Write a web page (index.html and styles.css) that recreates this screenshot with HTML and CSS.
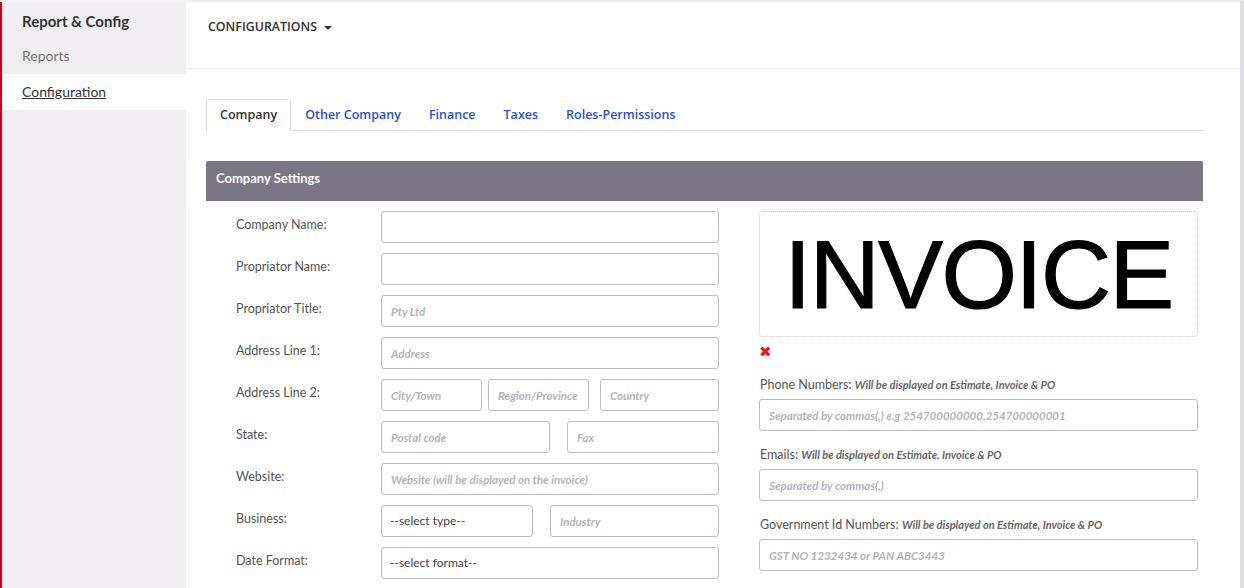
FILE: index.html
```html
<!DOCTYPE html>
<html>
<head>
<meta charset="utf-8">
<link rel="stylesheet" href="styles.css">
</head>
<body>
<div class="page">
  <aside class="sidebar">
    <div class="side-title">Report &amp; Config</div>
    <a class="side-link">Reports</a>
    <a class="side-link active">Configuration</a>
  </aside>
  <main class="main">
    <header class="topbar">
      <span class="topbar-title">CONFIGURATIONS</span>
      <span class="caret"></span>
    </header>
    <section class="content">
      <nav class="tabs">
        <a class="tab active">Company</a>
        <a class="tab">Other Company</a>
        <a class="tab">Finance</a>
        <a class="tab">Taxes</a>
        <a class="tab">Roles-Permissions</a>
      </nav>
      <div class="panel-head">Company Settings</div>
      <div class="form">
        <div class="left-col">
          <div class="row"><label class="lbl">Company Name:</label><div class="fields"><div class="input"></div></div></div>
          <div class="row"><label class="lbl">Propriator Name:</label><div class="fields"><div class="input"></div></div></div>
          <div class="row"><label class="lbl">Propriator Title:</label><div class="fields"><div class="input ph">Pty Ltd</div></div></div>
          <div class="row"><label class="lbl">Address Line 1:</label><div class="fields"><div class="input ph">Address</div></div></div>
          <div class="row"><label class="lbl">Address Line 2:</label><div class="fields"><div class="input ph w101">City/Town</div><div class="input ph w101 g6">Region/Province</div><div class="input ph grow g11">Country</div></div></div>
          <div class="row"><label class="lbl">State:</label><div class="fields"><div class="input ph w169">Postal code</div><div class="input ph grow g17">Fax</div></div></div>
          <div class="row"><label class="lbl">Website:</label><div class="fields"><div class="input ph">Website (will be displayed on the invoice)</div></div></div>
          <div class="row"><label class="lbl">Business:</label><div class="fields"><div class="input sel w152">--select type--</div><div class="input ph grow g17">Industry</div></div></div>
          <div class="row"><label class="lbl">Date Format:</label><div class="fields"><div class="input sel">--select format--</div></div></div>
        </div>
        <div class="right-col">
          <div class="logo-box"><span class="logo-text">INVOICE</span></div>
          <div class="remove">&#10006;</div>
          <div class="rlabel">Phone Numbers: <em>Will be displayed on Estimate, Invoice &amp; PO</em></div>
          <div class="input ph">Separated by commas(,) e.g 254700000000,254700000001</div>
          <div class="rlabel">Emails: <em>Will be displayed on Estimate, Invoice &amp; PO</em></div>
          <div class="input ph">Separated by commas(,)</div>
          <div class="rlabel">Government Id Numbers: <em>Will be displayed on Estimate, Invoice &amp; PO</em></div>
          <div class="input ph">GST NO 1232434 or PAN ABC3443</div>
        </div>
      </div>
    </section>
  </main>
</div>
</body>
</html>
```

FILE: styles.css
```css
* { box-sizing: border-box; }
html, body { margin: 0; padding: 0; }
body {
  font-family: "Lato", "Liberation Sans", sans-serif;
  color: #555;
  background: #fff;
  overflow: hidden;
}
.page {
  display: flex;
  height: 588px;
  border-top: 2px solid #f2f2f4;
  border-right: 4px solid #dddbe4;
}
.sidebar {
  width: 186px;
  flex: none;
  background: #f0eef3;
  border-left: 2px solid #d0021b;
  display: flex;
  flex-direction: column;
}
.side-title {
  font-weight: 700;
  font-size: 15px;
  color: #333;
  padding: 10px 0 0 20px;
  height: 36px;
}
.side-link {
  display: block;
  font-size: 14px;
  color: #777;
  padding-left: 20px;
  height: 36px;
  line-height: 36px;
}
.side-link.active {
  background: #fff;
  color: #333;
  text-decoration: underline;
}
.main { flex: 1; display: flex; flex-direction: column; }
.topbar {
  height: 67px;
  border-bottom: 1px solid #ebe9f0;
  display: flex;
  align-items: flex-start;
  padding: 16px 0 0 22px;
  gap: 7px;
}
.topbar-title {
  font-family: "Open Sans", sans-serif;
  font-weight: 600;
  font-size: 12.4px;
  color: #333;
}
.caret {
  width: 0; height: 0;
  margin-top: 8px;
  border-left: 4px solid transparent;
  border-right: 4px solid transparent;
  border-top: 4px solid #333;
}
.content { padding: 30px 37px 0 20px; }
.tabs {
  display: flex;
  height: 32px;
  border-bottom: 1px solid #dddddd;
}
.tab {
  font-family: "Open Sans", sans-serif;
  font-weight: 600;
  font-size: 12.5px;
  color: #2d50d0;
  padding: 0 13px;
  line-height: 29px;
  border: 1px solid transparent;
  border-bottom: none;
  height: 32px;
}
.tab.active {
  color: #333;
  background: #fff;
  border-color: #dddddd;
  margin-bottom: -1px;
  border-radius: 2px 2px 0 0;
}
.panel-head {
  margin-top: 30px;
  height: 40px;
  background: #7b7686;
  color: #fff;
  font-weight: 700;
  font-size: 13px;
  line-height: 35px;
  padding-left: 10px;
  border-radius: 2px 2px 0 0;
}
.form {
  display: flex;
  padding: 10px 0 0 30px;
  gap: 40px;
}
.left-col { width: 483px; display: flex; flex-direction: column; gap: 10px; }
.row { display: flex; height: 32px; }
.lbl { width: 145px; flex: none; font-size: 12.5px; padding-top: 6px; color: #555; }
.fields { flex: 1; display: flex; }
.input {
  height: 32px;
  border: 1px solid #bdbbc5;
  border-radius: 3px;
  background: #fff;
  flex: 1;
  font-size: 11.5px;
  padding-left: 9px;
  line-height: 31px;
  color: #444;
  white-space: nowrap;
  overflow: hidden;
}
.ph { font-style: italic; font-weight: 700; color: #b4b3bc; }
.sel { font-size: 12px; font-style: normal; font-weight: 400; color: #444; padding-left: 8px; line-height: 30px; }
.w101 { flex: none; width: 101px; }
.w169 { flex: none; width: 169px; }
.w152 { flex: none; width: 152px; }
.grow { flex: 1; }
.g6 { margin-left: 6px; }
.g11 { margin-left: 11px; flex: 1; }
.g17 { margin-left: 17px; }
.right-col { width: 439px; display: flex; flex-direction: column; }
.right-col .input { flex: none; }
.logo-box {
  height: 126px;
  border: 1px dotted #c9c8ce;
  border-radius: 4px;
  display: flex;
  align-items: center;
  justify-content: center;
}
.logo-text {
  font-family: "Liberation Sans", Arial, sans-serif;
  font-size: 97px;
  letter-spacing: -1.5px;
  color: #000;
  line-height: 1;
  -webkit-text-stroke: 1.2px #000;
}
.remove {
  color: #e8141b;
  font-size: 15px;
  line-height: 16px;
  margin-top: 6px;
  height: 34px;
}
.rlabel {
  font-size: 12.5px;
  color: #555;
  height: 22px;
  padding-left: 1px;
}
.rlabel em { font-weight: 700; font-size: 11px; color: #666; }
.right-col .input + .rlabel { margin-top: 16px; }
```
